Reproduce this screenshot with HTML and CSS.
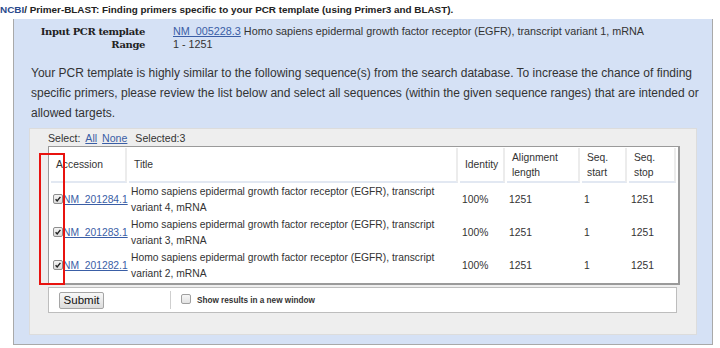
FILE: index.html
```html
<!DOCTYPE html>
<html lang="en">
  <head>
    <meta charset="UTF-8" />
    <title>Primer-BLAST</title>
    <link rel="stylesheet" href="styles.css">
  </head>
  <body>
    <div class="page-title">
      <a href="#">NCBI</a>/ Primer-BLAST: Finding primers specific to your PCR template (using Primer3 and BLAST).
    </div>
    <div class="panel">
      <div class="template-info">
        <div class="label">Input PCR template</div>
        <div class="value"><a href="#">NM_005228.3</a> Homo sapiens epidermal growth factor receptor (EGFR), transcript variant 1, mRNA</div>
        <div class="label">Range</div>
        <div class="value">1 - 1251</div>
      </div>
      <p class="note">
        Your PCR template is highly similar to the following sequence(s) from the search database. To increase the chance of finding
        specific primers, please review the list below and select all sequences (within the given sequence ranges) that are intended or
        allowed targets.
      </p>
      <div class="select-box">
        <div class="select-line">
          Select: <a href="#">All</a> <a href="#">None</a> <span class="count">Selected:3</span>
        </div>
        <div class="table-wrap">
          <table class="hits">
            <thead>
              <tr>
                <th class="col-acc">Accession</th>
                <th class="col-title">Title</th>
                <th class="col-ident">Identity</th>
                <th class="col-len">Alignment length</th>
                <th class="col-start">Seq. start</th>
                <th class="col-stop">Seq. stop</th>
              </tr>
            </thead>
            <tbody>
              <tr>
                <td class="acc"><span class="check"><svg viewBox="0 0 10 10"><path d="M2 5.2 L4 7.4 L8 2.4" /></svg></span><a href="#">NM_201284.1</a></td>
                <td>Homo sapiens epidermal growth factor receptor (EGFR), transcript variant 4, mRNA</td>
                <td class="num">100%</td>
                <td class="num">1251</td>
                <td class="num">1</td>
                <td class="num">1251</td>
              </tr>
              <tr>
                <td class="acc"><span class="check"><svg viewBox="0 0 10 10"><path d="M2 5.2 L4 7.4 L8 2.4" /></svg></span><a href="#">NM_201283.1</a></td>
                <td>Homo sapiens epidermal growth factor receptor (EGFR), transcript variant 3, mRNA</td>
                <td class="num">100%</td>
                <td class="num">1251</td>
                <td class="num">1</td>
                <td class="num">1251</td>
              </tr>
              <tr>
                <td class="acc"><span class="check"><svg viewBox="0 0 10 10"><path d="M2 5.2 L4 7.4 L8 2.4" /></svg></span><a href="#">NM_201282.1</a></td>
                <td>Homo sapiens epidermal growth factor receptor (EGFR), transcript variant 2, mRNA</td>
                <td class="num">100%</td>
                <td class="num">1251</td>
                <td class="num">1</td>
                <td class="num">1251</td>
              </tr>
            </tbody>
          </table>
          <div class="highlight"></div>
        </div>
        <div class="submit-bar">
          <button class="submit-btn">Submit</button>
          <span class="divider"></span>
          <label class="new-window"><span class="check"></span>Show results in a new window</label>
        </div>
      </div>
    </div>
  </body>
</html>
```
FILE: styles.css
```css
body {
  margin: 0;
  font-family: "Liberation Sans", Arial, sans-serif;
  color: #222;
  background: #fff;
}

a {
  color: #3a5ea6;
}

.page-title {
  height: 19px;
  font-size: 9.9px;
  font-weight: bold;
  line-height: 20px;
  color: #222;
  white-space: nowrap;
}

.page-title a {
  color: #2a4a8c;
  text-decoration: none;
}

.panel {
  margin: 0 7px 0 13px;
  height: 326px;
  box-sizing: border-box;
  background: #d5e1f5;
  border: 1px solid #a9a9a9;
  border-top: none;
  padding-top: 6px;
}

.template-info {
  display: grid;
  grid-template-columns: 131px 1fr;
  column-gap: 28px;
  line-height: 13px;
  color: #333;
}

.template-info .label {
  text-align: right;
  font-weight: bold;
  font-family: "DejaVu Serif", Georgia, serif;
  font-size: 10px;
  letter-spacing: -0.4px;
  color: #222;
}

.template-info .value {
  font-size: 10.8px;
}

.note {
  margin: 12px 0 0 17px;
  font-size: 12px;
  line-height: 20px;
  color: #333;
}

.select-box {
  margin: 5px 15px 0 15px;
  height: 207px;
  box-sizing: border-box;
  background: #eeeeee;
  border: 1px solid #dcdcdc;
  padding: 2px 19px 0 18px;
}

.select-line {
  font-size: 10.6px;
  line-height: 15px;
  color: #333;
}

.select-line a {
  margin-left: 2px;
}

.select-line .count {
  margin-left: 5px;
}

.table-wrap {
  position: relative;
}

.hits {
  width: 100%;
  table-layout: fixed;
  background: #fff;
  border: 1px solid #9a9a9a;
  border-right-width: 2px;
  border-bottom-width: 2px;
  border-spacing: 2px 1px;
  font-size: 10.3px;
  color: #333;
}

.hits th {
  box-sizing: border-box;
  text-align: left;
  font-weight: normal;
  height: 35px;
  padding: 0 5px;
  line-height: 15px;
  vertical-align: middle;
  border-right: 2px solid #ececec;
  border-bottom: 2px solid #e2e8f2;
}

.hits td {
  height: 32px;
  padding: 0 2px;
  line-height: 16px;
  vertical-align: middle;
}

.hits td.num {
  padding-left: 2px;
}

.hits td.acc {
  padding: 0 0 0 2px;
  white-space: nowrap;
}

.col-acc { width: 76px; }
.col-title { width: 329px; }
.col-ident { width: 45px; }
.col-len { width: 73px; }
.col-start { width: 45px; }
.col-stop { width: 47px; }

.check {
  display: inline-block;
  box-sizing: border-box;
  width: 10px;
  height: 10px;
  border: 1px solid #8e8e8e;
  border-radius: 2px;
  background: linear-gradient(#f4f4f4, #dadada);
  vertical-align: -1px;
}

.check svg {
  display: block;
  width: 8px;
  height: 8px;
}

.check path {
  fill: none;
  stroke: #222;
  stroke-width: 1.8;
}

.highlight {
  position: absolute;
  left: -9px;
  top: 7px;
  width: 22px;
  height: 128px;
  border: 2px solid #e8130f;
}

.submit-bar {
  display: flex;
  align-items: center;
  margin-top: 2px;
  height: 26px;
  box-sizing: border-box;
  background: #fff;
  border: 1px solid #bdbdbd;
  padding-left: 10px;
}

.submit-btn {
  font-family: "Liberation Sans", Arial, sans-serif;
  font-size: 11.5px;
  width: 45px;
  padding: 0;
  height: 17px;
  line-height: 14px;
  color: #111;
  background: linear-gradient(#f8f8f8, #dcdcdc);
  border: 1px solid #a5a5a5;
  border-radius: 2px;
}

.divider {
  width: 1px;
  height: 18px;
  background: #cfcfcf;
  margin: 0 10px 0 66px;
}

.new-window {
  font-size: 8.2px;
  font-weight: bold;
  color: #333;
  display: flex;
  align-items: center;
  gap: 6px;
}

.new-window .check {
  background: linear-gradient(#f6f6f6, #e2e2e2);
  border-color: #a0a0a0;
  margin-top: -2px;
}
```
